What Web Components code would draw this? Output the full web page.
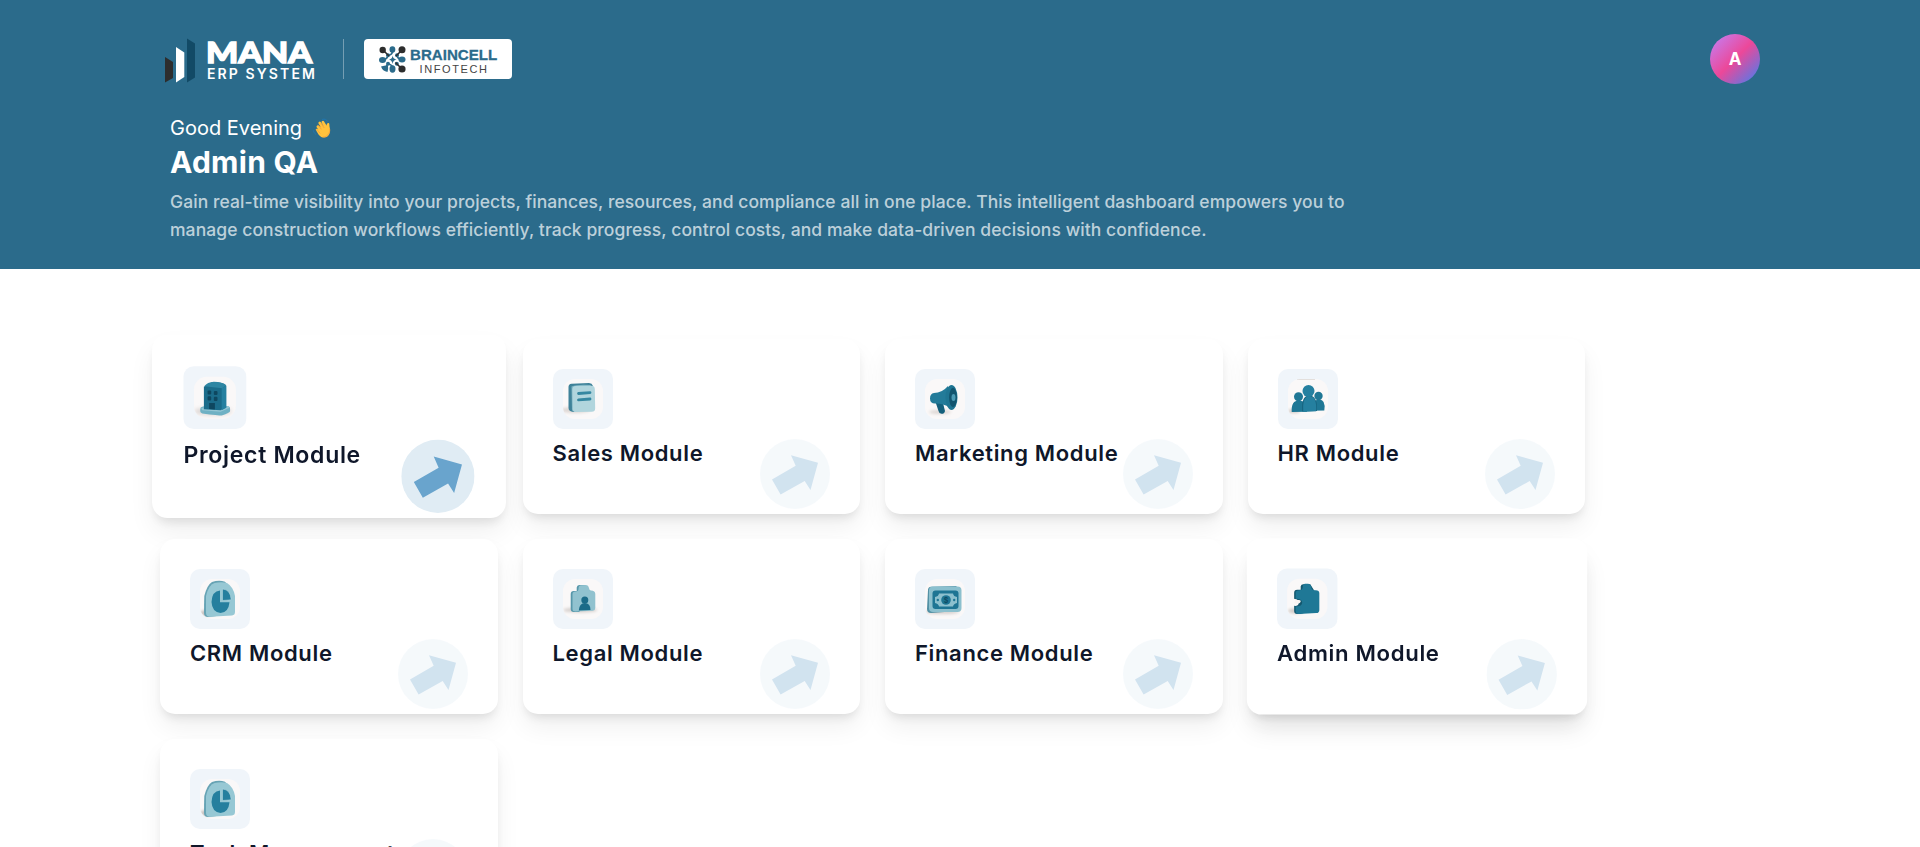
<!DOCTYPE html>
<html lang="en">
<head>
<meta charset="utf-8">
<title>Mana ERP System</title>
<style>
html,body{margin:0;height:100%;overflow:hidden;background:#fff;font-family:Inter,"Liberation Sans",sans-serif}
</style>
</head>
<body>
<erp-dashboard></erp-dashboard>
<script>
class BrandLogo extends HTMLElement{
  constructor(){super();this.attachShadow({mode:'open'}).innerHTML=`
<style>
:host{display:flex;align-items:center;height:50px}
svg{display:block}
.mark{width:31px;height:45px;margin:3px 11px 0 0}
.word{display:flex;flex-direction:column;color:#fff;width:111px;white-space:nowrap;padding-top:2px}
.mana{font:900 29px/26px Lato,sans-serif;-webkit-text-stroke:1.3px #fff;transform:translateX(-1px) scaleX(1.17);transform-origin:0 0;width:90px}
.erp{font:600 14px/17px Inter,sans-serif;letter-spacing:2.1px}
.rule{width:1px;height:40px;background:rgba(255,255,255,.35);margin:0 20px 0 25px}
.partner{display:flex;align-items:center;box-sizing:border-box;width:148px;height:40px;border-radius:4px;background:#fff;padding-left:15px}
.cell{width:27px;height:27px;margin-right:4px}
.names{display:flex;flex-direction:column;align-items:center;white-space:nowrap;padding-top:3px}
.b{font:700 15.1px/16px "Liberation Sans",sans-serif;color:#2b6b8b;-webkit-text-stroke:.3px #2b6b8b}
.i{font:400 11px/12px "Liberation Sans",sans-serif;color:#444;letter-spacing:1.6px;margin-right:-1px}
</style>
<svg class="mark" viewBox="0 0 31 45"><path fill="#2d2d2d" d="M0 19l8 5v16l-8 4.500z"/><path fill="#fff" d="M11 9l8.300 5.500v24.500L11 44.500z"/><path fill="#124a66" d="M22 .5l8 5v34l-8 5z"/></svg>
<div class="word"><span class="mana">MANA</span><span class="erp">ERP SYSTEM</span></div>
<div class="rule"></div>
<div class="partner">
<svg class="cell" viewBox="0 0 27 27">
<g fill="#2b6b8b"><ellipse cx="13.400" cy="3.600" rx="2.900" ry="3.300"/><ellipse cx="3.500" cy="14" rx="3.500" ry="3"/><ellipse cx="23" cy="13.500" rx="3.500" ry="2.900"/><ellipse cx="13.500" cy="23" rx="3" ry="3.700"/><circle cx="9" cy="9.200" r="2"/><circle cx="18" cy="9.200" r="2"/><circle cx="9" cy="17.800" r="2"/><circle cx="17.800" cy="17.800" r="2"/><path d="M10 13.500q3.500-.5 3.500-4 .5 3.500 4 4-3.500.5-4 4.500-.5-4-3.500-4.500zM2 20.500q4.500-1.500 7-1 .5 3-.5 6.500-5-1-6.500-5.500z"/></g>
<g stroke="#2b6b8b" stroke-width="1.600" fill="none"><path d="M13.400 5.500q0 3-4 3.700M4 13.500q4 0 5-4M23 13.500q-4 0-5-4M13.500 22q0-3-4-4M6 22l3-4"/></g>
<g stroke="#2d2d2d" stroke-width="1.500"><path d="M4 4l6 6M23 4l-6 6M16.500 16.500l6 6"/></g>
<g fill="#2d2d2d"><circle cx="3.700" cy="4" r="3.200"/><circle cx="23" cy="3.800" r="3.500"/><circle cx="23" cy="23" r="3.600"/></g>
</svg>
<div class="names"><span class="b">BRAINCELL</span><span class="i">INFOTECH</span></div>
</div>`}
}
customElements.define('brand-logo',BrandLogo);

class UserAvatar extends HTMLElement{
  constructor(){super();this.attachShadow({mode:'open'}).innerHTML=`
<style>:host{display:flex;align-items:center;justify-content:center;width:50px;height:50px;border-radius:50%;background:linear-gradient(135deg,#c084fc,#ec4899 50%,#3b82f6);color:#fff;font:700 17px/1 Inter,sans-serif}</style><slot></slot>`}
}
customElements.define('user-avatar',UserAvatar);

class WaveHand extends HTMLElement{
  constructor(){super();this.attachShadow({mode:'open'}).innerHTML=`
<style>:host{display:block;width:20px;height:20px}svg{display:block}</style>
<svg width="20" height="20" viewBox="0 0 22 22"><g fill="none" stroke-linecap="round" stroke="#ffc23c" stroke-width="3"><path d="M6.500 9.500l4 6M8.500 5.500l5 7M12 4.500l3.500 6"/></g><path fill="#ffc23c" d="M4 12.500c1-1.300 2.300-.6 3.200.2L8 9l7 1 1.500-3.500c.6-1.500 2.700-1 2.600.6-.2 2 1 4.400.8 7.400-.3 4.500-4 7.500-8 7-3-.4-5-3-7.900-9z"/><path fill="none" stroke="#f0913a" stroke-width=".7" d="M6.800 7.500l3.500 5M10 6l3.500 5M5 12l4 5M19.500 12c.5 5-3 9-7.500 9"/><path fill="none" stroke="#1f78b4" stroke-linecap="round" d="M11.500 1.500c2.500-.8 4.500 0 5.500 2M1.500 14c.5 1.800 1.300 3 2.500 3.800"/></svg>`}
}
customElements.define('wave-hand',WaveHand);

class DashboardHeader extends HTMLElement{
  constructor(){super();this.attachShadow({mode:'open'}).innerHTML=`
<style>
:host{display:block;box-sizing:border-box;height:269px;background:#2b6b8b;padding:34px 160px 0 165px;color:#fff}
.top{display:flex;justify-content:space-between;align-items:center;height:50px}
.intro{padding:29px 0 0 5px}
.hi{display:flex;align-items:center;gap:10px;font-size:20px;line-height:30px;height:30px}
h1{margin:0;font-weight:700;font-size:30px;line-height:38px;letter-spacing:.25px}
p{margin:7px 0 0;font-size:17.5px;font-weight:450;line-height:28px;letter-spacing:.075px;color:rgba(255,255,255,.7);white-space:nowrap}
p span{display:block}
</style>
<div class="top"><brand-logo></brand-logo><user-avatar>A</user-avatar></div>
<div class="intro">
<div class="hi"><span>Good Evening</span><wave-hand></wave-hand></div>
<h1>Admin QA</h1>
<p><span>Gain real-time visibility into your projects, finances, resources, and compliance all in one place. This intelligent dashboard empowers you to</span>
<span>manage construction workflows efficiently, track progress, control costs, and make data-driven decisions with confidence.</span></p>
</div>`}
}
customElements.define('dashboard-header',DashboardHeader);

const ART={
building:`<ellipse cx="18" cy="33" rx="18" ry="3.500" fill="#d9d3d0" filter="url(#s)"/><path fill="#6fb1c4" d="M6 31q0-2 2-2.300l3-.7 16 .5 4.500-.5q3 .3 3 2.500v2.500q0 1.500-8 4-3 0-18.500-2-2-.5-2-2z"/><path fill="#94c6d4" d="M7 30l4-1.500 14 1 8-1.500 1 1.500-8.500 4-17.500-1.500z"/><path fill="#1b6c8a" d="M9.500 9.500l8-4.500q10 0 13 3v21l-5 3L9.500 31z"/><path fill="#2e86a3" d="M9.800 9q3-4 9.200-4.300 8 0 12 3.500L27 11z"/><path fill="#2580a0" d="M26.500 11l4.500-2.500V29.500L26.500 32z"/><g fill="#0e475f"><rect x="13" y="13" width="3.500" height="4" rx="1"/><rect x="19" y="13.500" width="3.500" height="4" rx="1"/><rect x="13" y="18.700" width="3.500" height="4" rx="1"/><rect x="19" y="19.200" width="3.500" height="4" rx="1"/><path d="M14.500 25h5.500v6.300l-5.500-.5z"/></g>`,
book:`<ellipse cx="12" cy="31" rx="15" ry="3" fill="#ddd7d4" filter="url(#s)"/><path fill="#3f8299" d="M5.500 8q0-3 3-3.300L26 4q3 .2 4 3v3L12 33q-6.500 0-6.500-4z"/><path fill="#7fb5c4" d="M8.500 7.500q6-2.500 19-1.500l2 4-17 23-3.500-1.500z"/><rect x="9.500" y="7" width="22.500" height="26" rx="3.500" fill="#b1d5dd" transform="rotate(-1 20 20)"/><path stroke="#3587a1" stroke-width="2.800" stroke-linecap="round" d="M15.500 14.500l11.500-.8M15.500 20.800l11.500-.8"/>`,
horn:`<ellipse cx="15" cy="33" rx="11" ry="2" fill="#ddd7d4" filter="url(#s)"/><path fill="#15607c" d="M10.500 23l7-1 2.500 10q-.5 3-3.500 2.800-2.500-.3-3-2.800z"/><path fill="#237b99" d="M5 19.500q0-5 4-5.500 8 0 14-7l2 22q-5-4.500-15-4.500-5 0-5-5z"/><ellipse cx="26.500" cy="18.500" rx="6" ry="12.500" fill="#1f7592"/><ellipse cx="28" cy="18.500" rx="3.900" ry="9.700" fill="#12556f"/><ellipse cx="28.500" cy="18.500" rx="2" ry="3.500" fill="#4b9bb5"/>`,
people:`<path d="M9 .3h18" stroke="#d5cfcc" stroke-width=".8"/><ellipse cx="6" cy="32" rx="6" ry="2" fill="#d0c8c5" filter="url(#s)"/><g fill="#1f7795"><circle cx="10.500" cy="17.800" r="4.500"/><circle cx="30.500" cy="17" r="4.200"/><path d="M3.700 32.900Q3 21.500 11 21.500t8 11.200zM24 31.800Q24 20.500 31 20.500t5.300 11z"/></g><path fill="#17627e" d="M14.300 32.500q-1.300-16 7-16t7.700 15.500z"/><path fill="#2580a0" d="M15.300 32.700q-1.300-15.500 6.200-15.500t6.700 15z"/><circle cx="20.500" cy="12" r="6" fill="#2580a0"/>`,
pie:`<ellipse cx="7" cy="34" rx="7" ry="3" fill="#c5bebb" filter="url(#s)"/><path fill="#67a3b4" d="M4 34q0-9 .3-17Q7 6 12 3q7-2.500 13-.3l5 6-11 28-11 1.300q-4 0-4-4z"/><path fill="#97c8d4" d="M6 17Q8.500 6 14.500 4q7-1.500 12.500 0Q33.500 8 35 17v16q0 3-3 3.500L10 37.700q-4 0-4-4z"/><path fill="#257f9e" d="M20 11.500v11.700h9.500Q28.500 33.500 20.500 34 12 33 11.500 23q.5-11 8.500-11.500z"/><path fill="#257f9e" stroke="#c0dde3" stroke-width=".5" d="M22.500 10q8 .5 8.700 10.800l-8.700.7z"/>`,
badge:`<ellipse cx="17" cy="31" rx="17" ry="2.500" fill="#d5cfcc" filter="url(#s)"/><path fill="#5797aa" d="M7.700 15q0-2.800 3-3h3V8.500q.3-2.500 2.500-2.500h6l6 7-12 20h-5.500q-3 0-3-3z"/><path fill="#91c2cf" d="M9.500 15q0-2.500 3-2.500 3 0 3-2.500 0-3.500 2.500-3.800l5-.2q2.500.2 3 3 0 2.500 2 2.500 4.300 0 4.300 3.500v14q0 2.500-2.500 2.800l-17.300.7q-3 0-3-2.500z"/><path fill="#1b6b88" d="M15.800 31.500q.5-7.500 6-7.500t5.700 7z"/><circle cx="21.800" cy="21" r="3.500" fill="#1b6b88"/>`,
cash:`<ellipse cx="17" cy="33" rx="17" ry="2" fill="#d5cfcc" filter="url(#s)"/><path fill="#5291a5" d="M3 11q0-3 3-3.300L31 7l4 4-2 21-27 2q-4 0-4-4z"/><rect x="4" y="7.500" width="32.500" height="25.500" rx="4" fill="#8cc0ce"/><rect x="7.500" y="11.500" width="26" height="18.500" rx="3" fill="#1e7594"/><path fill="#8cc0ce" d="M14 14.500h14q.5 3 4 3.500v6q-3.500.5-4 3.500H14q-.5-3-4-3.500v-6q3.500-.5 4-3.500z"/><circle cx="21" cy="21" r="4.800" fill="#1e7594"/><circle cx="12.800" cy="21" r="1.200" fill="#1e7594"/><circle cx="29.200" cy="21" r="1.200" fill="#1e7594"/><text x="21" y="23.500" text-anchor="middle" font-size="7" font-weight="700" fill="#0e4b63">$</text>`,
puzzle:`<ellipse cx="9" cy="32" rx="8" ry="2.500" fill="#d0c9c6" filter="url(#s)"/><path fill="#14586f" d="M7 14q0-3 3-3h3.500V7.500Q14 5.500 16 5.500l7 0 5 8-2 18-13 3.500h-3q-3 0-3-3v-5q4 .5 4.500-2.500T7 20z"/><path fill="#1f7896" d="M8.500 13q1-1.500 3.500-1.500 3.500 0 3.500-3 0-3.300 2.500-3.500h3q3 .5 3 3.500t3.500 3q4.500-.5 4.500 3V31q0 3-3 3.200L11.500 35q-3 0-3-3v-4.500q6 .5 6.500-3.500 0-4-6.500-4z"/><path fill="#f8f3f1" d="M7 20.500q2.500-.5 3.500 .8 3.500-.8 3 1.700-1 2-3 1.500-2 1-3.500-.5l1-2z"/>`
};
class ModuleIcon extends HTMLElement{
  connectedCallback(){this.attachShadow({mode:'open'}).innerHTML=`
<style>:host{display:flex;align-items:center;justify-content:center;width:60px;height:60px;border-radius:10px;background:#f0f5fa}
.pic{width:40px;height:40px;border-radius:12px;background:#faf8f8;overflow:hidden}svg{display:block}</style>
<div class="pic"><svg width="40" height="40" viewBox="0 0 40 40" font-family="Inter,sans-serif"><filter id="s" x="-30%" y="-80%" width="160%" height="260%"><feGaussianBlur stdDeviation="1.8"/></filter>${ART[this.getAttribute('name')]}</svg></div>`}
}
customElements.define('module-icon',ModuleIcon);

class ModuleCard extends HTMLElement{
  connectedCallback(){this.attachShadow({mode:'open'}).innerHTML=`
<style>
:host{display:block;box-sizing:border-box;position:relative;height:175px;padding:30px;border-radius:15px;background:#fff;box-shadow:0 6px 10px -3px rgba(0,0,0,.1),0 14px 24px rgba(0,0,0,.06)}
:host([active]){transform:scale(1.047)}
:host([settling]){transform:scale(1.007);box-shadow:0 18px 25px -5px rgba(0,0,0,.1),0 8px 10px -6px rgba(0,0,0,.12),0 12px 24px rgba(0,0,0,.03)}
h2{margin:10px 0 0;font-size:22px;line-height:28px;font-weight:600;letter-spacing:.65px;color:#0f172a;white-space:nowrap}
.go{position:absolute;right:30px;bottom:5px;width:70px;height:70px;opacity:.3}
:host([active]) .go{opacity:1}
svg{display:block}
</style>
<module-icon name="${this.getAttribute('icon')}"></module-icon>
<h2><slot></slot></h2>
<div class="go"><svg width="70" height="70" viewBox="0 0 70 70"><circle cx="35" cy="35" r="35" fill="#e0ecf4"/><path fill="#69a4cd" d="M12 40.500L35.700 26.800 31 16.200 58 23.700 50.500 51 44.700 42 20.600 55.500z"/></svg></div>`}
}
customElements.define('module-card',ModuleCard);

class ErpDashboard extends HTMLElement{
  constructor(){super();this.attachShadow({mode:'open'}).innerHTML=`
<style>:host{display:block;height:847px;overflow:hidden}
main{display:grid;grid-template-columns:repeat(4,337.5px);gap:25px;padding:70px 0 0 160px}</style>
<dashboard-header></dashboard-header>
<main>
<module-card active icon="building">Project Module</module-card>
<module-card icon="book">Sales Module</module-card>
<module-card icon="horn">Marketing Module</module-card>
<module-card icon="people">HR Module</module-card>
<module-card icon="pie">CRM Module</module-card>
<module-card icon="badge">Legal Module</module-card>
<module-card icon="cash">Finance Module</module-card>
<module-card settling icon="puzzle">Admin Module</module-card>
<module-card icon="pie">Task Management</module-card>
</main>`}
}
customElements.define('erp-dashboard',ErpDashboard);
</script>
</body>
</html>
